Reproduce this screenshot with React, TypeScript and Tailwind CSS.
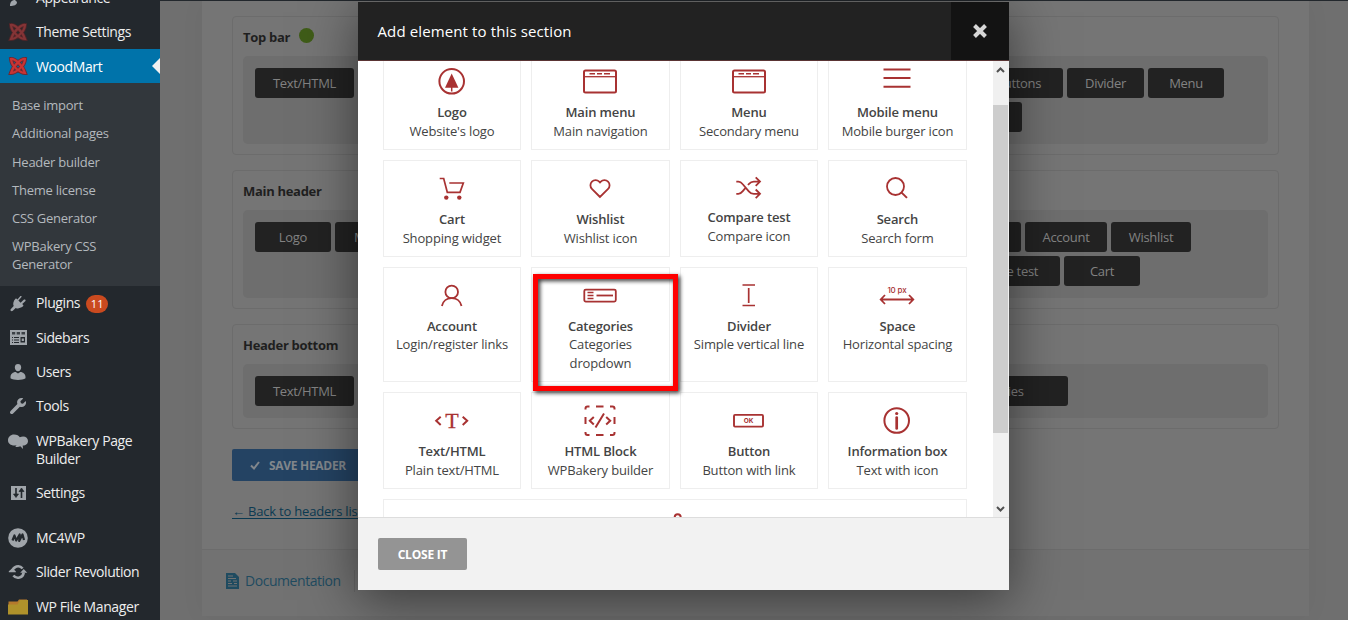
import React from 'react';
import clsx from 'clsx';

const RED = '#a83232';

/* ---------- sidebar icons ---------- */

const SideIcon: React.FC<{ children: React.ReactNode }> = ({ children }) => (
  <svg width="20" height="20" viewBox="0 0 20 20" fill="#a0a5aa" className="shrink-0">
    {children}
  </svg>
);

const Knot: React.FC<{ color: string; dark: string }> = ({ color, dark }) => (
  <SideIcon>
    <g fill="none" stroke={dark} strokeWidth="4">
      <path d="M3 3C6 2.500 14 8 17 17C13 17 3.500 11 3 3z" />
      <path d="M17 3C14 2.500 6 8 3 17C7 17 16.500 11 17 3z" />
    </g>
    <g fill="none" stroke={color} strokeWidth="2.200">
      <path d="M3 3C6 2.500 14 8 17 17C13 17 3.500 11 3 3z" />
      <path d="M17 3C14 2.500 6 8 3 17C7 17 16.500 11 17 3z" />
    </g>
  </SideIcon>
);

const BrushIcon = () => (
  <SideIcon>
    <path d="M2 18c0-4 2-6 5-6l2 2c0 3-3 4-7 4zM9 10l8-7 1 1-7 8z" />
  </SideIcon>
);

const PlugIcon = () => (
  <SideIcon>
    <path d="M13.1 4.4l-2.700 3.200 2.200 2.100 3.100-2.900c.5-.5 1.200-.5 1.600-.1s.4 1.100-.1 1.500l-3 2.900 1 .9c.3.300.3.800 0 1.100-1.700 1.700-4.800 3.100-7.500 1.800L4.800 17.700c-.6.600-1.500.6-2 .1s-.5-1.300.1-1.900l2.800-2.800C4.500 10.500 5.700 7.500 7.500 5.700c.3-.3.8-.3 1.100 0l.8.800 2.600-3.100c.4-.5 1.100-.5 1.500-.1s.1.700-.4 1.100z" />
  </SideIcon>
);

const SidebarsIcon = () => (
  <SideIcon>
    <path d="M2 2h17v15H2z" />
    <g fill="#23282d">
      <path d="M4 4h3.200v2.500H4zM8.700 4h3.300v2.500H8.700zM13.500 4h3.500v2.500h-3.500z" opacity=".8" />
      <path d="M4 9h1v1H4zM6 9h5v1H6zM4 11.500h1v1H4zM6 11.500h5v1H6zM4 14h1v1H4zM6 14h5v1H6zM12.500 9H17v5.500h-4.500z" />
    </g>
    <path d="M13.700 10.500h2.200v2.500h-2.200z" />
  </SideIcon>
);

const UserIcon = () => (
  <SideIcon>
    <path d="M10 9.300c-1.900 0-3.200-1.900-3.200-4C6.800 3.200 8.100 2 10 2s3.200 1.200 3.200 3.300c0 2.100-1.300 4-3.200 4zm-2.300 .8l2.300 1.400 2.300-1.400c2.700.1 5.200 2 5.200 4.800v1.400C16 17.500 13 18 10 18s-6-.5-7.500-1.700v-1.400c0-2.800 2.500-4.700 5.200-4.800z" />
  </SideIcon>
);

const WrenchIcon = () => (
  <SideIcon>
    <path d="M16.700 9.800c-1.300 1.300-3.200 1.600-4.800.9L5.100 17.500c-.8.800-1.900.8-2.600.1s-.7-1.900.1-2.700l6.800-6.800c-.6-1.600-.3-3.500 1-4.800 1.300-1.300 3.200-1.600 4.800-.9L12.400 5.200l.5 2 2 .5 2.800-2.800c.7 1.600.3 3.600-1 4.900z" />
  </SideIcon>
);

const BakeryIcon = () => (
  <SideIcon>
    <path d="M6 3.500c3 0 5 1.300 5.800 2.700 1-.5 2.300-.7 3.300-.7 2.900 0 4.900 2 4.900 4.400 0 2.700-2.100 4.600-5 4.600h-.3l.3 3.500-2.700-2.700c-1.500.8-3.300.9-5 .5l1.300-1.600C3.700 15.200 0 13 0 9.200 0 6 2.600 3.500 6 3.500z" />
  </SideIcon>
);

const SettingsIcon = () => (
  <SideIcon>
    <path d="M3 3h15v14H3z" />
    <g stroke="#23282d" strokeWidth="1.600">
      <path d="M5.500 11h5l-2.500 3.500zM11 8.500h5L13.500 5z" fill="#23282d" strokeWidth=".7" />
      <path d="M8 5v8M13.500 7v8" />
    </g>
  </SideIcon>
);

const McIcon = () => (
  <SideIcon>
    <circle cx="10" cy="10" r="9.800" />
    <path d="M4.500 12.500L6.500 7.500l1.700 5 3.500-6-.5 6.500 3.300-6.500 1.500 5.500" fill="none" stroke="#23282d" strokeWidth="2.200" strokeLinejoin="round" />
  </SideIcon>
);

const SyncIcon = () => (
  <SideIcon>
    <g fill="none" stroke="#a0a5aa" strokeWidth="2.600">
      <path d="M4.300 9.500a5.800 5.800 0 0 1 10.300-3" />
      <path d="M15.700 10.500a5.800 5.800 0 0 1-10.300 3" />
    </g>
    <path d="M.8 9.200L4.300 6.200l3.500 3v1H.8zM12.200 10.800h7L15.700 7z" />
  </SideIcon>
);

const FolderIcon = () => (
  <SideIcon>
    <path d="M.5 4.500h9L11 2.500h8V17H.5z" fill="#b5792c" />
    <path d="M0 7.500h9.500L12 3h8v14.500H0z" fill="#af922b" />
  </SideIcon>
);

/* ---------- element icons (40x30 box) ---------- */

const icons: Record<string, React.ReactNode> = {
  logo: (
    <>
      <circle cx="19.700" cy="15.300" r="12.300" />
      <path d="M19.700 7.500l6.700 14.300H13z" fill={RED} stroke="none" />
      <path d="M19.700 21v4.500" strokeWidth="1.500" />
    </>
  ),
  window: (
    <>
      <rect x="4" y="4.500" width="32" height="22" rx="1.500" />
      <path d="M4.500 10.700h31" strokeWidth="1.300" />
      <path d="M9.500 7.800h5.500M17 7.800h5M24 7.800h6" strokeWidth="1.400" />
    </>
  ),
  burger: <path d="M6.500 3.500h27M6.500 12h27M6.500 20.700h27" />,
  cart: (
    <>
      <path d="M7.700 5.500h4l3.600 13.800H28L31.300 10h-14" strokeWidth="1.700" />
      <circle cx="14.300" cy="24.600" r="2.200" fill={RED} stroke="none" />
      <circle cx="27.300" cy="24.600" r="2.200" fill={RED} stroke="none" />
    </>
  ),
  heart: <path d="M20 24l-8.100-8.200a5.100 5.100 0 0 1 7.300-7.200l.8.900.8-.9a5.100 5.100 0 0 1 7.300 7.200z" strokeWidth="1.800" />,
  compare: (
    <path
      d="M7.300 8.600h2c2 0 3 .8 4.500 2.700l6 7c1.500 1.800 3 2.500 5 2.500h6M7.300 20.800h2c2 0 3-.8 4.500-2.700l2.300-2.700M19 12l1-1.100c1.500-1.800 2.800-2.300 4.800-2.300h6M26.700 4.300l4.300 4.300-4.300 4.300M26.700 16.500l4.300 4.300-4.300 4.300"
      strokeWidth="1.800"
    />
  ),
  search: (
    <>
      <circle cx="18.500" cy="13.500" r="8.500" strokeWidth="1.800" />
      <path d="M24.600 19.600l5.400 5.300" />
    </>
  ),
  account: (
    <>
      <circle cx="19.700" cy="11.900" r="6.300" strokeWidth="1.800" />
      <path d="M9.900 26c1-5 5-7.900 9.800-7.900s8.800 2.900 9.800 7.900" strokeWidth="1.800" />
    </>
  ),
  categories: (
    <>
      <rect x="4.300" y="9.600" width="31.500" height="12" rx="1.500" strokeWidth="1.800" />
      <path d="M7.500 12.500h6M7.500 15.500h6M7.500 18.500h6" strokeWidth="1.300" />
      <path d="M16.500 15.500H33" strokeWidth="1.800" />
    </>
  ),
  divider: <path d="M13.500 5h12.500M13.500 25.500h12.500M19.700 8v15" strokeWidth="1.700" />,
  space: (
    <>
      <text x="20" y="12.500" fontSize="8" fontWeight="500" textAnchor="middle" fill={RED} stroke="none" fontFamily="Inter, sans-serif">
        10 px
      </text>
      <path d="M4 19.500h32M8 15l-4.300 4.500L8 24M32 15l4.300 4.500L32 24" strokeWidth="1.800" />
    </>
  ),
  text: (
    <>
      <path d="M8.700 11.700l-4.500 4.100 4.500 4.100M30.700 11.700l4.500 4.100-4.500 4.100" />
      <text x="19.800" y="22.700" fontSize="22" textAnchor="middle" fill={RED} strokeWidth=".3" fontFamily="'Liberation Serif', serif">
        T
      </text>
    </>
  ),
  html: (
    <>
      <path d="M5.500 4.500V3.500A2 2 0 0 1 7.500 1.500h2M30 1.500h2.500a2 2 0 0 1 2 2v1M34.500 27v1a2 2 0 0 1-2 2h-2.500M9.500 30H7.500a2 2 0 0 1-2-2v-1" />
      <path d="M16 1.500h7.500M16 30h7.500M5.500 12v7M34.500 12v7" />
      <path d="M13.800 12l-4 3.700 4 3.700M26.200 12l4 3.700-4 3.700M24 8.500l-8.500 14" />
    </>
  ),
  button: (
    <>
      <rect x="5" y="9.900" width="29" height="11.700" rx="1" strokeWidth="1.900" />
      <text x="19.500" y="18.200" fontSize="6.500" fontWeight="700" textAnchor="middle" fill={RED} stroke="none" fontFamily="Inter, sans-serif">
        OK
      </text>
    </>
  ),
  info: (
    <>
      <circle cx="19.700" cy="15.500" r="12.300" />
      <path d="M19.700 12.500v11" strokeWidth="2.700" strokeLinecap="round" />
      <circle cx="19.700" cy="8.500" r="1.600" fill={RED} stroke="none" />
    </>
  ),
  share: (
    <>
      <circle cx="22.700" cy="5.200" r="3" />
      <path d="M20 7l-8 6" />
      <circle cx="10" cy="15" r="3" />
    </>
  ),
};

interface Element {
  icon: string;
  title: string;
  text: string;
}

const elements: Element[] = [
  { icon: 'logo', title: 'Logo', text: "Website's logo" },
  { icon: 'window', title: 'Main menu', text: 'Main navigation' },
  { icon: 'window', title: 'Menu', text: 'Secondary menu' },
  { icon: 'burger', title: 'Mobile menu', text: 'Mobile burger icon' },
  { icon: 'cart', title: 'Cart', text: 'Shopping widget' },
  { icon: 'heart', title: 'Wishlist', text: 'Wishlist icon' },
  { icon: 'compare', title: 'Compare test', text: 'Compare icon' },
  { icon: 'search', title: 'Search', text: 'Search form' },
  { icon: 'account', title: 'Account', text: 'Login/register links' },
  { icon: 'categories', title: 'Categories', text: 'Categories dropdown' },
  { icon: 'divider', title: 'Divider', text: 'Simple vertical line' },
  { icon: 'space', title: 'Space', text: 'Horizontal spacing' },
  { icon: 'text', title: 'Text/HTML', text: 'Plain text/HTML' },
  { icon: 'html', title: 'HTML Block', text: 'WPBakery builder' },
  { icon: 'button', title: 'Button', text: 'Button with link' },
  { icon: 'info', title: 'Information box', text: 'Text with icon' },
];

const ElementIcon: React.FC<{ name: string }> = ({ name }) => (
  <svg width="40" height="30" viewBox="0 0 40 30" fill="none" stroke={RED} strokeWidth="2" className="block overflow-visible">
    {icons[name]}
  </svg>
);

const ElementCard: React.FC<Element> = ({ icon, title, text }) => {
  const shifted = icon === 'compare';
  return (
    <div className="relative flex flex-col items-center border border-[#eee] px-[9px] pt-3 pb-[9.500px] text-center text-[13px] leading-[18.2px] tracking-[-0.15px] text-[#444]">
      <ElementIcon name={icon} />
      <div className={clsx('font-semibold', shifted ? 'mt-[5px]' : 'mt-[7px]')}>{title}</div>
      <div className={clsx(icon === 'categories' && 'w-[90px]')}>{text}</div>
      {icon === 'categories' && (
        <div className="absolute top-[6px] left-px z-10 h-[117px] w-[145px] border-[5px] border-[#fe0000] drop-shadow-[2px_2px_2px_rgba(0,0,0,0.8)]" />
      )}
    </div>
  );
};

/* ---------- admin sidebar ---------- */

const MenuItem: React.FC<{ icon: React.ReactNode; label: string; badge?: string; active?: boolean }> = ({
  icon,
  label,
  badge,
  active,
}) => (
  <div className={clsx('relative flex items-start gap-2 py-2 pl-2 text-[14px] leading-[18.2px]', active ? 'bg-[#0073aa] text-white' : 'text-[#eee]')}>
    <div className="-my-px">{icon}</div>
    <div className={clsx('w-[112px] tracking-[-0.4px]', active && 'pt-px -mb-px')}>
      {label}
      {badge && (
        <span className="ml-[6px] inline-block h-[18px] w-[22px] rounded-full bg-[#ca4a1f] text-center text-[11px] leading-[18px] tracking-normal text-white">
          {badge}
        </span>
      )}
    </div>
    {active && <div className="absolute top-[9px] right-0 border-y-8 border-r-8 border-y-transparent border-r-[#f1f1f1]" />}
  </div>
);

const submenu = ['Base import', 'Additional pages', 'Header builder', 'Theme license', 'CSS Generator', 'WPBakery CSS Generator'];

const Sidebar = () => (
  <aside className="h-[620px] w-[160px] shrink-0 overflow-hidden bg-[#23282d]">
    <div className="-mt-[19.4px]">
      <MenuItem icon={<BrushIcon />} label="Appearance" />
      <MenuItem icon={<Knot color="#843436" dark="#4f2528" />} label="Theme Settings" />
      <MenuItem icon={<Knot color="#c93434" dark="#6a2a34" />} label="WoodMart" active />
      <div className="bg-[#32373c] pt-[8px] pb-[7.400px]">
        {submenu.map((s) => (
          <div key={s} className="w-[130px] py-[5px] pl-3 text-[13px] leading-[18.2px] tracking-[-0.25px] text-[#b4b9be]">
            {s}
          </div>
        ))}
      </div>
      <MenuItem icon={<PlugIcon />} label="Plugins" badge="11" />
      <MenuItem icon={<SidebarsIcon />} label="Sidebars" />
      <MenuItem icon={<UserIcon />} label="Users" />
      <MenuItem icon={<WrenchIcon />} label="Tools" />
      <MenuItem icon={<BakeryIcon />} label="WPBakery Page Builder" />
      <MenuItem icon={<SettingsIcon />} label="Settings" />
      <div className="h-[11px]" />
      <MenuItem icon={<McIcon />} label="MC4WP" />
      <MenuItem icon={<SyncIcon />} label="Slider Revolution" />
      <MenuItem icon={<FolderIcon />} label="WP File Manager" />
    </div>
  </aside>
);

/* ---------- header builder behind the modal ---------- */

const Chip: React.FC<{ label?: string; width: string }> = ({ label, width }) => (
  <div
    className={clsx(
      'flex h-[30px] shrink-0 items-center justify-center rounded-[3px] bg-[#222] pt-px text-[13px] tracking-[-0.3px] text-[#828282]',
      width,
    )}
  >
    {label}
  </div>
);

interface RowProps {
  title: string;
  dot?: boolean;
  height: string;
  rightWidth: string;
  left: React.ReactNode;
  right: React.ReactNode;
}

const BuilderRow: React.FC<RowProps> = ({ title, dot, height, rightWidth, left, right }) => (
  <div className="rounded-[4px] border border-[#6c6c6c] px-[10px] pb-[10px]">
    <div className="flex h-[39px] items-center gap-[9px] pt-[3px] text-[13px] font-bold tracking-[-0.3px] text-[#1f1f1f]">
      {title}
      {dot && <span className="-mt-[5px] size-[15px] rounded-full bg-[#3f5c18]" />}
    </div>
    <div className={clsx('flex justify-between rounded-[5px] bg-[#6e6e6e] pt-3 pl-3', height)}>
      <div className="flex gap-1">{left}</div>
      <div className={clsx('flex flex-col gap-1', rightWidth)}>{right}</div>
    </div>
  </div>
);

const Builder = () => (
  <main className="flex h-[615px] w-[1107px] flex-col bg-[#757575] shadow-[0_0_25px_rgba(0,0,0,0.04)]">
    <div className="flex flex-col gap-[15px] px-[30px] pt-[15px]">
      <BuilderRow
        title="Top bar"
        dot
        height="h-[88px]"
        rightWidth="w-[330px]"
        left={<Chip label="Text/HTML" width="w-[99px]" />}
        right={
          <>
            <div className="flex gap-1">
              <Chip label="Social buttons" width="w-[125px]" />
              <Chip label="Divider" width="w-[77px]" />
              <Chip label="Menu" width="w-[76px]" />
            </div>
            <Chip width="w-[84px]" />
          </>
        }
      />
      <BuilderRow
        title="Main header"
        height="h-[88px]"
        rightWidth="w-[330px]"
        left={
          <>
            <Chip label="Logo" width="w-[76px]" />
            <Chip label="Main menu" width="w-[104px]" />
          </>
        }
        right={
          <>
            <div className="flex gap-1">
              <Chip width="w-[83px]" />
              <Chip label="Account" width="w-[82px]" />
              <Chip label="Wishlist" width="w-[80px]" />
            </div>
            <div className="flex gap-1">
              <Chip label="Compare test" width="w-[122px]" />
              <Chip label="Cart" width="w-[76px]" />
            </div>
          </>
        }
      />
      <BuilderRow
        title="Header bottom"
        height="h-[54px]"
        rightWidth="w-[350px]"
        left={<Chip label="Text/HTML" width="w-[99px]" />}
        right={<Chip label="Categories" width="w-[150px]" />}
      />
    </div>
    <div className="mt-5 ml-[30px] flex h-8 w-[134px] items-center rounded-[2px] bg-[#244363] pl-[18px] text-[12px] font-bold text-[#82878c]">
      <svg width="10" height="9" viewBox="0 0 10 9" className="mr-[9px] shrink-0" fill="none" stroke="#82878c" strokeWidth="2">
        <path d="M1 4.500l3 3L9 1" />
      </svg>
      <span className="pt-px tracking-[-0.3px] whitespace-nowrap">SAVE HEADER</span>
    </div>
    <div className="mt-[21px] ml-[30px] text-[13px] leading-[18px] tracking-[-0.2px] whitespace-nowrap text-[#0b3a52] underline underline-offset-2">
      ← Back to headers list
    </div>
    <div className="mt-auto flex h-[67px] items-center border-t border-[#6c6c6c] bg-[#727272] pb-1 pl-6 text-[14px] tracking-[-0.450px] text-[#1f4b60]">
      <svg width="13" height="16" viewBox="0 0 13 16" className="mr-[6px] shrink-0" fill="#1f4b60">
        <path d="M0 0h9l4 4v12H0z" />
        <path d="M2 3h5M2 5.500h8M2 8h3M7 8h4M2 10.500h4M8 10.500h3M2 13h9" stroke="#727272" />
      </svg>
      <span className="-mt-[2px]">Documentation</span>
      <span className="ml-[13px] h-[22px] w-px bg-[#676767]" />
    </div>
  </main>
);

/* ---------- modal ---------- */

const Scrollbar = () => (
  <div className="flex h-full w-4 flex-col items-center bg-[#f0f0f0]">
    <svg width="16" height="44" viewBox="0 0 16 44" fill="none" stroke="#505050" strokeWidth="2">
      <path d="M4 11l3.500-3.500L11 11" />
    </svg>
    <div className="mr-px h-[328px] w-[15px] bg-[#cdcdcd]" />
    <svg width="16" height="84" viewBox="0 0 16 84" fill="none" stroke="#505050" strokeWidth="2">
      <path d="M4 74l3.500 3.500L11 74" />
    </svg>
  </div>
);

const Modal = () => (
  <div className="absolute top-[2px] left-[358px] flex h-[588px] w-[651px] flex-col bg-white shadow-[0_10px_50px_rgba(0,0,0,0.5)]">
    <div className="flex h-[59px] shrink-0 items-stretch justify-between border-b border-[#5a3434] bg-[#222]">
      <h2 className="flex items-center pl-[19.500px] text-[15px] tracking-[0.12px] text-white">Add element to this section</h2>
      <button type="button" className="flex w-[58px] items-center justify-center bg-[#131313]" aria-label="Close">
        <svg width="14" height="14" viewBox="0 0 14 14" stroke="#d6d6d6" strokeWidth="4">
          <path d="M1.500 1.500l11 11M12.500 1.500l-11 11" />
        </svg>
      </button>
    </div>
    <div className="flex h-[456px] shrink-0 justify-between overflow-hidden">
      <div className="-mt-[7.600px] ml-[24.700px] w-[584px]">
        <div className="grid grid-cols-4 gap-[10px]">
          {elements.map((el) => (
            <ElementCard key={el.title} {...el} />
          ))}
          <div className="col-span-4 flex h-[97px] justify-center border border-[#eee] pt-3">
            <ElementIcon name="share" />
          </div>
        </div>
      </div>
      <Scrollbar />
    </div>
    <div className="flex grow items-center border-t border-[#ddd] bg-[#f2f2f2] pl-5">
      <button type="button" className="h-8 w-[89px] rounded-[2px] bg-[#949494] pt-px text-[12px] font-bold tracking-[-0.2px] text-white">
        CLOSE IT
      </button>
    </div>
  </div>
);

export default function App() {
  return (
    <div className="relative flex h-[620px] w-[1348px] overflow-hidden bg-[#6f6f6f] font-['Open_Sans',sans-serif]">
      <Sidebar />
      <div className="grow border-t border-[#23282d] pl-[42px]">
        <Builder />
      </div>
      <Modal />
    </div>
  );
}
